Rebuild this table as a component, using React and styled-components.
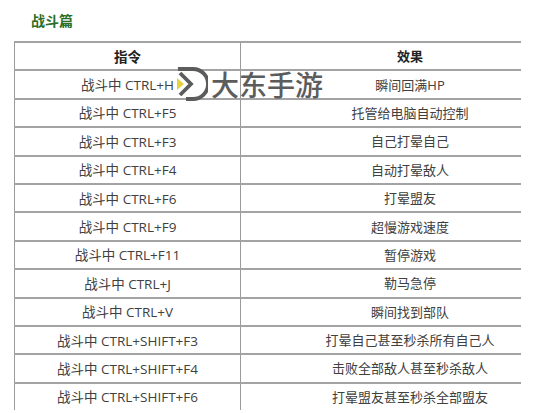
import React from "react";
import styled, { createGlobalStyle } from "styled-components";

const GlobalStyle = createGlobalStyle`
  html, body {
    margin: 0;
    padding: 0;
    background: #ffffff;
  }
  body {
    font-family: "Open Sans", "Noto Sans CJK SC", sans-serif;
    color: #333;
  }
`;

const Page = styled.div`
  position: relative;
  width: 551px;
  height: 413px;
  overflow: hidden;
  padding: 11px 0 0 14px;
  box-sizing: border-box;
`;

const Title = styled.h3`
  margin: 0 0 0 17px;
  height: 30px;
  font-family: "Noto Sans CJK SC", sans-serif;
  font-size: 14px;
  font-weight: 700;
  line-height: 18px;
  color: #2b6e27;
`;

const Table = styled.div`
  width: 507px;
  display: flex;
  flex-direction: column;
`;

const Row = styled.div`
  display: grid;
  grid-template-columns: 226px 281px;
  height: 28.4px;
  box-sizing: border-box;
  border-top: 2px solid #a3a3a3;
`;

// the effect column's text sits right of the visible column centre
const Cell = styled.div`
  display: flex;
  align-items: center;
  justify-content: center;
  border-left: 1px solid #9a9a9a;
  padding-bottom: 1px;
  padding-left: ${({ $effect }) => ($effect ? "58px" : "0")};
  overflow: hidden;
  font-family: "Open Sans", "Noto Sans CJK SC", sans-serif;
  font-size: ${({ $effect }) => ($effect ? "13px" : "13.5px")};
  font-weight: ${({ $head }) => ($head ? 700 : 400)};
  color: ${({ $head }) => ($head ? "#222" : "#404040")};
  white-space: nowrap;
`;

const Watermark = styled.div`
  position: absolute;
  left: 176px;
  top: 66px;
  display: flex;
  align-items: center;
  gap: 3px;
  pointer-events: none;
`;

const MarkText = styled.span`
  font-family: "Noto Sans CJK SC", sans-serif;
  font-size: 28px;
  font-weight: 500;
  line-height: 36px;
  color: #5c5c5c;
`;

const rows = [
  ["战斗中 CTRL+H", "瞬间回满HP"],
  ["战斗中 CTRL+F5", "托管给电脑自动控制"],
  ["战斗中 CTRL+F3", "自己打晕自己"],
  ["战斗中 CTRL+F4", "自动打晕敌人"],
  ["战斗中 CTRL+F6", "打晕盟友"],
  ["战斗中 CTRL+F9", "超慢游戏速度"],
  ["战斗中 CTRL+F11", "暂停游戏"],
  ["战斗中 CTRL+J", "勒马急停"],
  ["战斗中 CTRL+V", "瞬间找到部队"],
  ["战斗中 CTRL+SHIFT+F3", "打晕自己甚至秒杀所有自己人"],
  ["战斗中 CTRL+SHIFT+F4", "击败全部敌人甚至秒杀敌人"],
  ["战斗中 CTRL+SHIFT+F6", "打晕盟友甚至秒杀全部盟友"],
];

const Logo = () => (
  <svg width="32" height="36" viewBox="0 0 32 36">
    <path
      d="M2 3 H17 A15 15 0 0 1 17 33 H10"
      fill="none"
      stroke="#5c5c5c"
      strokeWidth="3.8"
    />
    <polyline
      points="4,7 15,18 4,29"
      fill="none"
      stroke="#5c5c5c"
      strokeWidth="3.8"
    />
    <polygon points="1,12 8,18 1,24" fill="#e6d23a" />
  </svg>
);

export default function App() {
  return (
    <>
      <GlobalStyle />
      <Page>
        <Title>战斗篇</Title>
        <Table>
          <Row>
            <Cell $head>指令</Cell>
            <Cell $head $effect>效果</Cell>
          </Row>
          {rows.map(([cmd, effect]) => (
            <Row key={cmd}>
              <Cell>{cmd}</Cell>
              <Cell $effect>{effect}</Cell>
            </Row>
          ))}
        </Table>
        <Watermark>
          <Logo />
          <MarkText>大东手游</MarkText>
        </Watermark>
      </Page>
    </>
  );
}
